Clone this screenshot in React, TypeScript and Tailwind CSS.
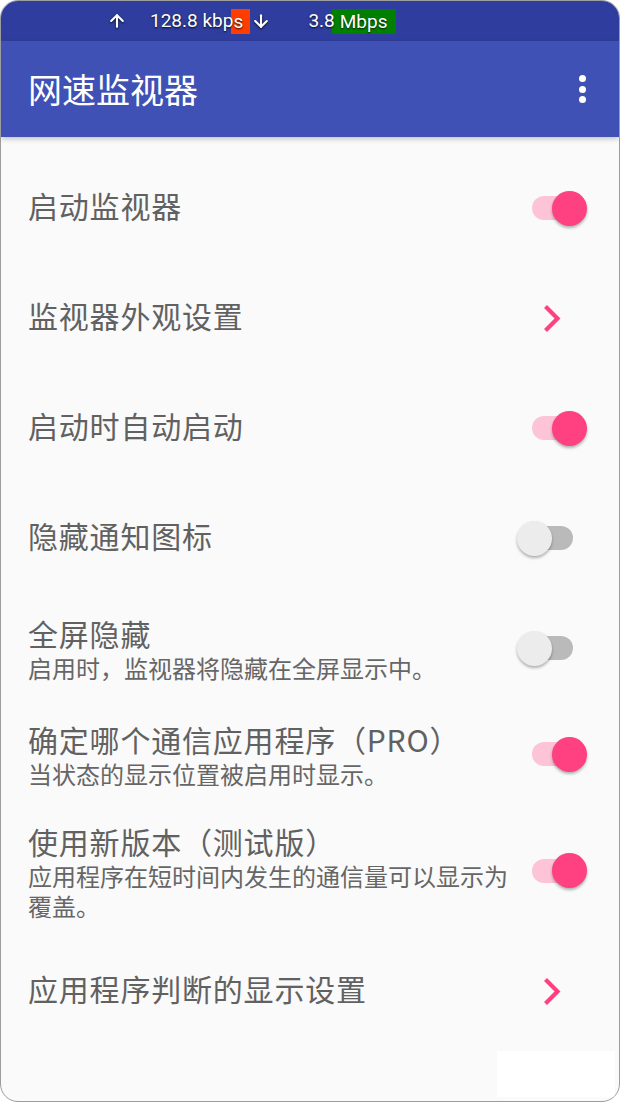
import React from 'react';
import { ArrowUp, ArrowDown } from 'lucide-react';

type Row = {
  title: string;
  subtitle?: string;
  kind: 'switch' | 'chevron';
  on?: boolean;
  height: string;
};

const rows: Row[] = [
  { title: '启动监视器', kind: 'switch', on: true, height: 'h-[110px]' },
  { title: '监视器外观设置', kind: 'chevron', height: 'h-[110px]' },
  { title: '启动时自动启动', kind: 'switch', on: true, height: 'h-[110px]' },
  { title: '隐藏通知图标', kind: 'switch', on: false, height: 'h-[110px]' },
  {
    title: '全屏隐藏',
    subtitle: '启用时，监视器将隐藏在全屏显示中。',
    kind: 'switch',
    on: false,
    height: 'h-[110px]',
  },
  {
    title: '确定哪个通信应用程序（PRO）',
    subtitle: '当状态的显示位置被启用时显示。',
    kind: 'switch',
    on: true,
    height: 'h-[102px]',
  },
  {
    title: '使用新版本（测试版）',
    subtitle: '应用程序在短时间内发生的通信量可以显示为覆盖。',
    kind: 'switch',
    on: true,
    height: 'h-[131px]',
  },
  { title: '应用程序判断的显示设置', kind: 'chevron', height: 'h-[110px]' },
];

// Material style switch, thumb overhangs the track
const Toggle: React.FC<{ on: boolean }> = ({ on }) => {
  return (
    <div className="relative w-[70px] h-[35px]">
      <div
        className={
          on
            ? 'absolute left-[15px] top-[5.5px] w-[41px] h-[24px] rounded-full bg-[#fdc3d7]'
            : 'absolute left-[15px] top-[5.5px] w-[41px] h-[24px] rounded-full bg-[#bababa]'
        }
      />
      <div
        className={
          on
            ? 'absolute left-[35px] top-0 w-[35px] h-[35px] rounded-full bg-[#ff4081] shadow-[0_2px_3px_rgba(0,0,0,0.3)]'
            : 'absolute left-0 top-0 w-[35px] h-[35px] rounded-full bg-[#ececec] shadow-[0_2px_3px_rgba(0,0,0,0.3)]'
        }
      />
    </div>
  );
};

const Chevron: React.FC = () => (
  <svg width="18" height="27" viewBox="0 0 18 27">
    <path d="M2.5 1.5 L14.5 13.5 L2.5 25.5" fill="none" stroke="#ff4081" strokeWidth="4.2" />
  </svg>
);

export default function App() {
  const shadow = '[text-shadow:0_1px_2px_rgba(0,0,0,0.85)]';

  return (
    <div className="w-[620px] h-[1102px] bg-white">
      <div className="w-full h-full rounded-[18px] border border-[#9c9c9c] overflow-hidden bg-[#fafafa] flex flex-col font-['Noto_Sans_CJK_SC',sans-serif]">
        {/* status bar */}
        <div className={`h-[40px] bg-[#2f3e9e] flex items-center pl-[106px] text-white text-[19px] font-['Roboto',sans-serif] ${shadow}`}>
          <ArrowUp size={20} strokeWidth={2.5} className="drop-shadow-[0_1px_1px_rgba(0,0,0,0.8)]" />
          <span className="relative z-10 ml-[23px] whitespace-pre">128.8 kbp</span>
          <span className="inline-block -ml-[2px] pl-[2px] w-[19px] h-[25px] leading-[25px] bg-[#ff3d00]">s</span>
          <ArrowDown size={20} strokeWidth={2.5} className="ml-[1px] drop-shadow-[0_1px_1px_rgba(0,0,0,0.8)]" />
          <span className="relative z-10 ml-[37px]">3.8</span>
          <span className="inline-block -ml-[3px] pl-[8px] w-[64px] h-[25px] leading-[25px] bg-[#008000]">Mbps</span>
        </div>

        {/* app bar */}
        <div className="relative z-10 h-[96px] bg-[#3f51b5] flex items-center justify-between pl-[27px] pr-[33px] shadow-[0_2px_5px_rgba(0,0,0,0.22)]">
          <h1 className="text-white text-[34px] leading-none">网速监视器</h1>
          <div className="flex flex-col gap-[3.5px]">
            <span className="w-[7px] h-[7px] rounded-full bg-white" />
            <span className="w-[7px] h-[7px] rounded-full bg-white" />
            <span className="w-[7px] h-[7px] rounded-full bg-white" />
          </div>
        </div>

        {/* preference list */}
        <div className="pt-[16px] flex flex-col">
          {rows.map((row) => (
            <div key={row.title} className={`${row.height} flex items-center pl-[27px] pr-[32px]`}>
              <div className={row.subtitle ? 'flex-1 min-w-0' : 'flex-1 min-w-0 pb-[6px]'}>
                <div className="text-[30px] leading-[40px] tracking-[0.8px] text-[#616161]">{row.title}</div>
                {row.subtitle && (
                  <div className="text-[24px] leading-[30px] text-[#666666]">{row.subtitle}</div>
                )}
              </div>
              <div className="w-[70px] flex justify-center">
                {row.kind === 'switch' ? <Toggle on={!!row.on} /> : <Chevron />}
              </div>
            </div>
          ))}
        </div>

        <div className="flex justify-end pr-[4px] mt-[5px]">
          <div className="w-[118px] h-[46px] bg-white" />
        </div>
      </div>
    </div>
  );
}
